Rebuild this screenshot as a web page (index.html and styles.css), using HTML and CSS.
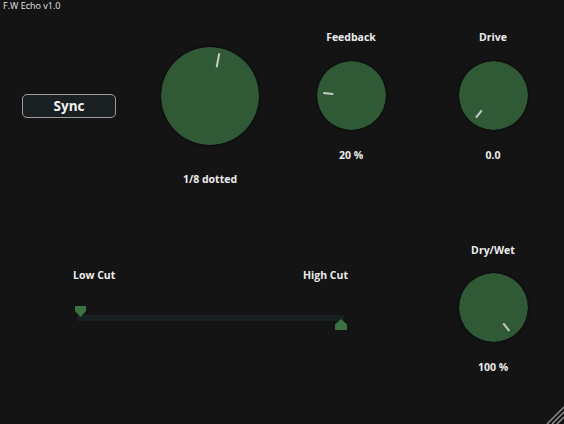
FILE: index.html
```html
<!DOCTYPE html>
<html>
<head>
<meta charset="utf-8">
<link rel="stylesheet" href="styles.css">
</head>
<body>
<div class="app">
  <div class="title">F.W Echo v1.0</div>
  <div class="row top">
    <div class="sync">Sync</div>
    <div class="col main">
      <svg class="knob big" viewBox="0 0 98 98" width="98" height="98">
        <circle cx="49" cy="49" r="49" fill="#2f5a35"/>
        <line x1="58.3" y1="6.3" x2="55.7" y2="20.3" class="ptr"/>
      </svg>
      <div class="value v-main">1/8 dotted</div>
    </div>
    <div class="col feedback">
      <div class="label">Feedback</div>
      <svg class="knob" viewBox="0 0 69 69" width="69" height="69">
        <circle cx="34.5" cy="34.5" r="34.5" fill="#2f5a35"/>
        <line x1="6.3" y1="32" x2="16.3" y2="33" class="ptr"/>
      </svg>
      <div class="value">20 %</div>
    </div>
    <div class="col drive">
      <div class="label">Drive</div>
      <svg class="knob" viewBox="0 0 69 69" width="69" height="69">
        <circle cx="34.5" cy="34.5" r="34.5" fill="#2f5a35"/>
        <line x1="17" y1="56.7" x2="22.7" y2="49.3" class="ptr"/>
      </svg>
      <div class="value">0.0</div>
    </div>
  </div>
  <div class="row bottom">
    <div class="cuts">
      <div class="cut-labels"><span>Low Cut</span><span>High Cut</span></div>
      <div class="slider">
        <div class="track"></div>
        <svg class="thumb low" viewBox="0 0 11 11" width="11" height="11"><polygon points="0,0 11,0 11,5 5.5,11 0,5" fill="#3a7242"/></svg>
        <svg class="thumb high" viewBox="0 0 12 11" width="12" height="11"><polygon points="6,0 12,5.5 12,11 0,11 0,5.5" fill="#3a7242"/></svg>
      </div>
    </div>
    <div class="col drywet">
      <div class="label">Dry/Wet</div>
      <svg class="knob" viewBox="0 0 69 69" width="69" height="69">
        <circle cx="34.5" cy="34.5" r="34.5" fill="#2f5a35"/>
        <line x1="44.3" y1="50.3" x2="50.3" y2="58" class="ptr"/>
      </svg>
      <div class="value">100 %</div>
    </div>
  </div>
  <svg class="grip" viewBox="0 0 18 18" width="18" height="18">
    <line x1="1" y1="18" x2="18" y2="1" class="gl"/>
    <line x1="6" y1="18" x2="18" y2="6" class="gl"/>
    <line x1="11" y1="18" x2="18" y2="11" class="gl"/>
  </svg>
</div>
</body>
</html>
```
FILE: styles.css
```css
html, body {
  margin: 0;
  padding: 0;
  background: #141414;
}
.app {
  position: relative;
  width: 564px;
  height: 424px;
  overflow: hidden;
  background: #141414;
  color: #ececec;
  font-family: "Open Sans", "Liberation Sans", sans-serif;
  display: flex;
  flex-direction: column;
}
.title {
  height: 12px;
  line-height: 12px;
  font-size: 9px;
  padding-left: 3px;
  color: #e6e6e6;
}
.row {
  display: flex;
  align-items: flex-start;
}
.top {
  height: 188px;
  padding-left: 22px;
}
.bottom {
  height: 224px;
}
.sync {
  margin-top: 82px;
  width: 94px;
  height: 24px;
  box-sizing: border-box;
  border: 1px solid #9c9c9c;
  border-radius: 5px;
  background: #1a1f21;
  font-weight: 700;
  font-size: 13.5px;
  line-height: 22px;
  text-align: center;
  color: #f2f2f2;
}
.col {
  display: flex;
  flex-direction: column;
  align-items: center;
  width: 80px;
}
.label, .value {
  font-weight: 700;
  font-size: 10.5px;
  line-height: 14px;
  white-space: nowrap;
}
.knob {
  display: block;
  border-radius: 50%;
  box-shadow: 0 0 3px rgba(0, 0, 0, 0.7);
}
.ptr {
  stroke: #c9c9c9;
  stroke-width: 2;
  stroke-linecap: butt;
}
.main {
  width: 100px;
  margin-left: 44px;
  padding-top: 35px;
}
.v-main {
  margin-top: 27px;
}
.feedback {
  margin-left: 51px;
  padding-top: 18px;
}
.drive {
  margin-left: 62px;
  padding-top: 18px;
}
.feedback .knob, .drive .knob {
  margin-top: 17px;
}
.feedback .value, .drive .value {
  margin-top: 18px;
}
.cuts {
  margin-left: 73px;
  width: 275px;
  padding-top: 68px;
}
.cut-labels {
  display: flex;
  justify-content: space-between;
  font-weight: 700;
  font-size: 10.5px;
  line-height: 14px;
}
.slider {
  position: relative;
  margin-top: 25px;
  padding-top: 8px;
  height: 16px;
}
.track {
  margin-left: 4px;
  width: 267px;
  height: 6px;
  background: #182022;
}
.thumb {
  position: absolute;
  display: block;
}
.thumb.low {
  left: 2px;
  top: -1px;
}
.thumb.high {
  left: 262px;
  top: 12px;
}
.drywet {
  margin-left: 105px;
  padding-top: 43px;
}
.drywet .knob {
  margin-top: 16px;
}
.drywet .value {
  margin-top: 18px;
}
.grip {
  position: absolute;
  right: 0;
  bottom: 0;
}
.gl {
  stroke: #8e8e8e;
  stroke-width: 1.5;
}
```
